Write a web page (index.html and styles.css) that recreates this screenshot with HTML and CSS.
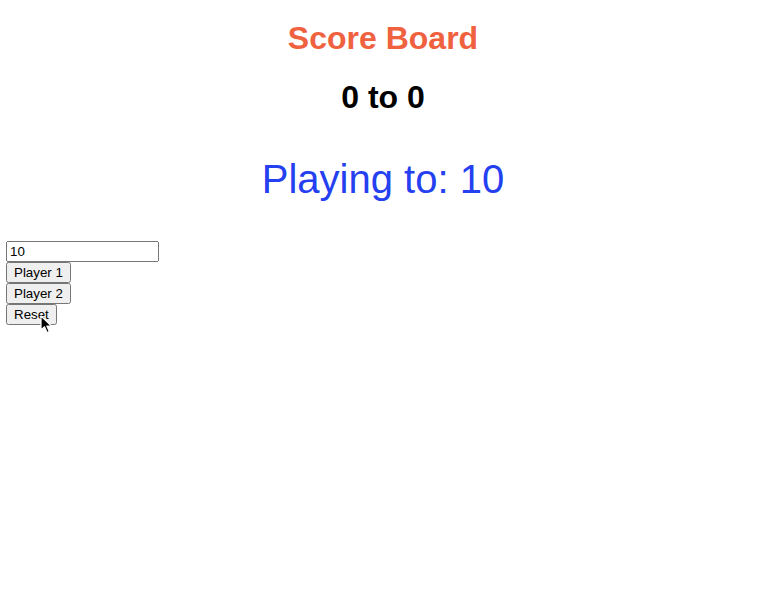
FILE: index.html
```html
<!DOCTYPE html>
<html>
<head>
<meta charset="utf-8">
<link rel="stylesheet" href="styles.css">
</head>
<body>
<h1 class="title">Score Board</h1>
<h2 class="score">0 to 0</h2>
<p class="target">Playing to: 10</p>
<div class="controls">
  <input class="limit" type="number" value="10">
  <button class="btn">Player 1</button>
  <button class="btn">Player 2</button>
  <button class="btn">Reset</button>
</div>
<svg class="cursor" width="13" height="19" viewBox="0 0 13 19"><path d="M1 1 L1 15 L4.5 11.8 L7 17.5 L9.3 16.5 L6.8 11 L11.5 11 Z" fill="#000" stroke="#fff" stroke-width="1.2" stroke-linejoin="round"/></svg>
</body>
</html>
```
FILE: styles.css
```css
body {
  margin: 6px;
  font-family: "Liberation Sans", Arial, sans-serif;
  background: #fff;
}
.title {
  text-align: center;
  color: #f0623f;
  font-size: 32px;
  margin: 14px 0 0;
}
.score {
  text-align: center;
  font-size: 32px;
  margin: 22px 0 0;
}
.target {
  text-align: center;
  color: #2440f0;
  font-size: 40px;
  margin: 41px 0 0;
}
.controls {
  margin-top: 39px;
}
.limit, .btn {
  display: block;
  font-family: "Liberation Sans", Arial, sans-serif;
  font-size: 13.333px;
}
.limit {
  width: 153px;
  height: 21px;
  box-sizing: border-box;
  margin: 0;
}
.btn {
  margin: 0;
  height: 21px;
  padding: 1px 6px;
}
.cursor {
  position: fixed;
  left: 40px;
  top: 315px;
  z-index: 10;
}
```
